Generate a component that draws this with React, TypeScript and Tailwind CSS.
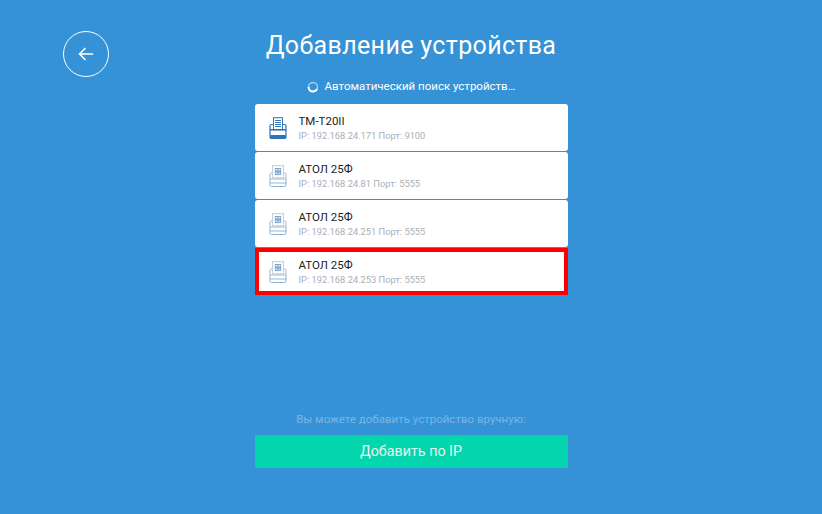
import React from "react";

const devices = [
  { name: "TM-T20II", info: "IP: 192.168.24.171 Порт: 9100", kind: "receipt" },
  { name: "АТОЛ 25Ф", info: "IP: 192.168.24.81 Порт: 5555", kind: "qr" },
  { name: "АТОЛ 25Ф", info: "IP: 192.168.24.251 Порт: 5555", kind: "qr" },
  { name: "АТОЛ 25Ф", info: "IP: 192.168.24.253 Порт: 5555", kind: "qr", selected: true },
];

const ReceiptPrinter = () => (
  <svg width="18" height="22" viewBox="0 0 18 22" fill="none">
    <rect x="4.500" y="0.700" width="9" height="12" fill="#fff" stroke="#2f74b5" />
    <path d="M6 3.500h6M6 5.500h6M6 7.500h6M6 9.500h6" stroke="#2f74b5" />
    <path d="M4 7.500H2.500A1.500 1.500 0 0 0 1 9v11a1.500 1.500 0 0 0 1.500 1.500h13A1.500 1.500 0 0 0 17 20V9a1.500 1.500 0 0 0-1.500-1.500H14" stroke="#2f74b5" strokeWidth="1.200" />
    <rect x="1" y="12" width="16" height="1.500" fill="#2f74b5" />
    <rect x="1" y="18" width="16" height="3.500" rx="1" fill="#2f74b5" />
  </svg>
);

const QrPrinter = () => (
  <svg width="18" height="22" viewBox="0 0 18 22" fill="none">
    <rect x="3.500" y="0.700" width="11" height="12" fill="#fff" stroke="#94b4d2" strokeDasharray="1 0.600" />
    <rect x="5.800" y="3" width="6.400" height="7" fill="#86a9ca" />
    <path d="M6.800 4h1.600v1.600H6.800zM9.600 4h1.600v1.600H9.600zM6.800 7.400h1.600V9H6.800zM9.900 7.800h1.200V9H9.900z" fill="#e4edf5" />
    <path d="M3 8H2.500A1.500 1.500 0 0 0 1 9.500V20a1.500 1.500 0 0 0 1.500 1.500h13A1.500 1.500 0 0 0 17 20V9.500A1.500 1.500 0 0 0 15.500 8H15" stroke="#94b4d2" />
    <path d="M1 14h16M1 18h16" stroke="#94b4d2" />
  </svg>
);

const Spinner = () => (
  <svg width="12" height="12" viewBox="0 0 12 12" fill="none">
    <circle cx="6" cy="6" r="4.500" stroke="#a9d0ee" strokeWidth="1.400" />
    <path d="M1.500 6A4.500 4.500 0 0 0 6 10.500 4.500 4.500 0 0 0 10 8" stroke="#fff" strokeWidth="2" />
  </svg>
);

const App = () => {
  return (
    <div className="w-[822px] h-[514px] overflow-hidden bg-[#3592d6] flex flex-col items-center font-['Roboto',sans-serif]">
      <header className="w-full grid grid-cols-[1fr_auto_1fr] pt-[31px] pl-[63px]">
        <button className="w-[46px] h-[46px] rounded-full border-[1.500px] border-white flex items-center justify-center text-white">
          <svg width="18" height="18" viewBox="0 0 18 18" fill="none" stroke="currentColor" strokeWidth="1.700" strokeLinecap="round" strokeLinejoin="round">
            <path d="M15.500 9H2.500M8 3.500 2.500 9 8 14.500" />
          </svg>
        </button>
        <h1 className="mr-[63px] text-[25px] leading-[29px] tracking-[0.35px] text-white">Добавление устройства</h1>
        <div />
      </header>

      <div className="flex items-center gap-[6px] h-[20px] text-[11.500px] text-white">
        <Spinner />
        <span>Автоматический поиск устройств…</span>
      </div>

      <ul className="mt-[7px] w-[313px] flex flex-col gap-[1px]">
        {devices.map((d) => (
          <li
            key={d.info}
            className={`h-[47px] flex items-center bg-white ${d.selected ? "border-[4px] border-[#f00] pl-[10px]" : "rounded-[3px] pl-[14px]"}`}
          >
            <div className="w-[18px] flex-none flex justify-center">{d.kind === "receipt" ? <ReceiptPrinter /> : <QrPrinter />}</div>
            <div className="flex flex-col ml-[12px]">
              <span className="text-[11.500px] leading-[15px] text-[#222]">{d.name}</span>
              <span className="text-[9.300px] leading-[13px] text-[#a9b0b6]">{d.info}</span>
            </div>
          </li>
        ))}
      </ul>

      <p className="mt-auto text-[11.500px] leading-[16px] text-[#79b5e6]">Вы можете добавить устройство вручную:</p>
      <button className="mt-[8px] mb-[46px] w-[313px] h-[33px] rounded-[2px] bg-[#03d6ad] text-[14.300px] text-[#e4f8f2]">
        Добавить по IP
      </button>
    </div>
  );
};

export default App;
